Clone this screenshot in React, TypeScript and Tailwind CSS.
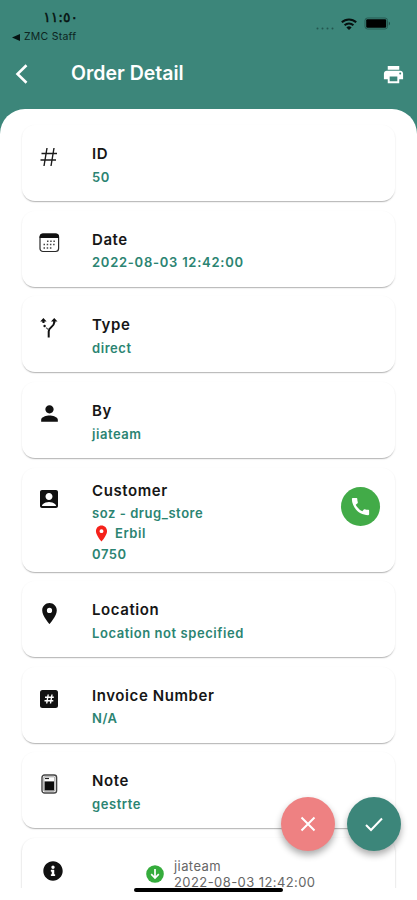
import type { ReactNode } from 'react';
import { MdAccountBox, MdCall, MdLocationOn, MdPerson, MdPrint } from 'react-icons/md';
import { FaInfoCircle } from 'react-icons/fa';

function HashIcon() {
  return (
    <svg width="18" height="20" viewBox="0 0 18 20" fill="none" stroke="#1c1c1c" strokeWidth="1.4">
      <path d="M7 1 4 19M14 1l-3 18M1.5 6.5h15.5M.5 13h15.5" />
    </svg>
  );
}

function CalendarIcon() {
  return (
    <svg width="21" height="20" viewBox="0 0 21 20" fill="none">
      <rect x="1" y="1.2" width="18.6" height="17.3" rx="3" stroke="#2a2a2a" strokeWidth="1.2" />
      <path d="M.6 5V4Q.6.6 4 .6h12.6Q20 .6 20 4v1z" fill="#111" />
      <path
        d="M8 8.3h9M4.5 11.6h12.5M4.5 14.9h9"
        stroke="#444"
        strokeWidth="1.5"
        strokeDasharray="1.5 1.7"
      />
    </svg>
  );
}

function RouteIcon() {
  return (
    <svg width="18" height="20" viewBox="0 0 18 20" fill="#111">
      <path d="M3.4 0l3.2 3.4H4.5V5H2.4V3.4H.2zM14.2 0l3.3 3.4h-2.2V5h-2.1V3.4h-2.2z" />
      <path d="M14.2 4.5C14 9.5 8.7 8.5 8.7 13.5V19.5" fill="none" stroke="#111" strokeWidth="2" />
      <circle cx="4.6" cy="8" r="1.2" />
      <path d="M6 9.6l2.7 2.2" stroke="#555" strokeWidth="1.2" />
    </svg>
  );
}

function NumberBoxIcon() {
  return (
    <svg width="18" height="18" viewBox="0 0 18 18" fill="none">
      <rect width="18" height="18" rx="2.5" fill="#111" />
      <path d="M8.2 4.5 6.7 13.5M12 4.5l-1.5 9M5 7.3h8.8M4.5 10.8h8.8" stroke="#fff" strokeWidth="1.4" />
    </svg>
  );
}

function NoteIcon() {
  return (
    <svg width="17" height="20" viewBox="0 0 17 20" fill="none">
      <rect x="1" y="1" width="14.6" height="18" rx="2.6" stroke="#444" strokeWidth="1.4" />
      <rect x="2.8" y="2.8" width="11" height="14.4" rx="1" stroke="#777" strokeWidth=".7" />
      <path d="M4 4.5h4" stroke="#222" strokeWidth="1.2" />
      <rect x="3.6" y="7.4" width="9.4" height="9" fill="#0c0c0c" />
    </svg>
  );
}

function StatusBar() {
  return (
    <div className="flex h-[48px] justify-between">
      <div className="w-[78px] pl-[12px] pt-[9px] text-[#0c2421]">
        <div className="text-right font-['DejaVu_Sans'] text-[14px] leading-[17px] tracking-[-1.4px] text-[#06110f] [-webkit-text-stroke:0.4px_#06110f]">
          ١١:٥٠
        </div>
        <div className="mt-[4px] flex items-center gap-[4px] text-[10.5px] leading-[14px] whitespace-nowrap">
          <svg width="8" height="7" viewBox="0 0 8 7">
            <path d="M8 0v7L0 3.5z" fill="#061413" />
          </svg>
          <span className="tracking-[0.25px]">ZMC Staff</span>
        </div>
      </div>
      <div className="flex h-[13px] items-center gap-[7px] pr-[26px] mt-[17px]">
        <svg width="18" height="3" viewBox="0 0 18 3" className="mt-[9px]" fill="#24564f">
          <circle cx="1.5" cy="1.5" r="1" />
          <circle cx="6.5" cy="1.5" r="1" />
          <circle cx="11.5" cy="1.5" r="1" />
          <circle cx="16.5" cy="1.5" r="1" />
        </svg>
        <svg width="16" height="12" viewBox="0 0 16 12" fill="none" stroke="#06110f" strokeWidth="2">
          <path d="M.8 4.3a10.4 10.4 0 0 1 14.4 0M3.6 7.2a6.3 6.3 0 0 1 8.8 0" />
          <path d="M8 12 5.4 9.4a3.8 3.8 0 0 1 5.2 0z" fill="#06110f" stroke="none" />
        </svg>
        <svg width="27" height="13" viewBox="0 0 27 13" fill="none">
          <rect x="1" y="1" width="22.5" height="11" rx="2.5" stroke="#265a53" />
          <rect x="2.2" y="2.2" width="20" height="8.6" rx="1.2" fill="#000" />
          <path d="M24.8 4.5v4a2.4 2.4 0 0 0 0-4" fill="#1c4741" />
        </svg>
      </div>
    </div>
  );
}

function DetailCard({ icon, title, children, className = 'h-[76px] pt-[19px]' }: {
  icon: ReactNode;
  title: string;
  children: ReactNode;
  className?: string;
}) {
  return (
    <div
      className={`flex shrink-0 rounded-[13px] bg-white shadow-[0_2px_1px_-1px_rgba(0,0,0,0.2),0_1px_2px_rgba(0,0,0,0.13)] ${className}`}
    >
      <div className="flex h-[26px] w-[54px] shrink-0 items-center justify-center text-[#111]">{icon}</div>
      <div className="pl-[16px] grow">
        <h2 className="text-[15px] leading-[20px] font-semibold tracking-[0.58px] text-[#161616]">{title}</h2>
        <div className="pt-[2.6px] text-[13px] leading-[20px] font-semibold tracking-[0.56px] text-[#2b8472]">
          {children}
        </div>
      </div>
    </div>
  );
}

export default function App() {
  return (
    <div className="relative flex h-[900px] w-[417px] flex-col overflow-hidden bg-white font-[Inter,sans-serif]">
      <div className="h-[135px] shrink-0 bg-[#3c867a]">
        <StatusBar />
        <header className="flex h-[52px] items-center pl-[15px] pr-[12px] text-white">
          <svg width="13" height="20" viewBox="0 0 13 20" fill="none" stroke="#fff" strokeWidth="2.6">
            <path d="M11.5 1.2 2.5 10l9 8.8" />
          </svg>
          <h1 className="grow pl-[43px] text-[19.5px] font-semibold">Order Detail</h1>
          <MdPrint size={23} />
        </header>
      </div>

      <main className="-mt-[26px] flex h-[779px] shrink-0 flex-col gap-[9.65px] overflow-hidden rounded-t-[25px] bg-white px-[22px] pt-[16px]">
        <DetailCard icon={<HashIcon />} title="ID">50</DetailCard>
        <DetailCard icon={<CalendarIcon />} title="Date">
          <span className="tracking-[0.74px]">2022-08-03 12:42:00</span>
        </DetailCard>
        <DetailCard icon={<RouteIcon />} title="Type">direct</DetailCard>
        <DetailCard icon={<MdPerson size={25} />} title="By">jiateam</DetailCard>
        <DetailCard
          icon={<div className="pt-[10px]"><MdAccountBox size={24} /></div>}
          title="Customer"
          className="relative h-[104px] pt-[13px]"
        >
          <p>soz - drug_store</p>
          <p className="flex items-center gap-[4px]">
            <MdLocationOn size={19} color="#f5221b" />
            Erbil
          </p>
          <p className="leading-[23px]">0750</p>
          <button className="absolute top-[19px] right-[15px] flex size-[39px] items-center justify-center rounded-full bg-[#42ab48] text-white">
            <MdCall size={23} />
          </button>
        </DetailCard>
        <DetailCard icon={<MdLocationOn size={25} />} title="Location">Location not specified</DetailCard>
        <DetailCard icon={<NumberBoxIcon />} title="Invoice Number">N/A</DetailCard>
        <DetailCard icon={<NoteIcon />} title="Note">gestrte</DetailCard>

        {/* order history */}
        <div className="flex h-[120px] shrink-0 rounded-[13px] bg-white pt-[18px] shadow-[0_1px_2px_rgba(0,0,0,0.25)]">
          <FaInfoCircle size={20} className="mt-[5px] ml-[21px] shrink-0 text-[#111]" />
          <svg width="18" height="18" viewBox="0 0 18 18" fill="none" className="mt-[9px] ml-[83px] shrink-0">
            <circle cx="9" cy="9" r="8.8" fill="#35ac3c" />
            <path d="M9 4v9M5.2 9.2 9 13l3.8-3.8" stroke="#fff" strokeWidth="1.7" />
          </svg>
          <div className="pl-[10px] pt-[2px] text-[13px] leading-[16px] tracking-[0.42px] text-[#666]">
            <p>jiateam</p>
            <p>2022-08-03 12:42:00</p>
          </div>
        </div>
      </main>

      <div className="absolute top-[797px] right-[16px] flex gap-[12px] text-white">
        <button className="flex size-[54px] items-center justify-center rounded-full bg-[#ee8182] shadow-[0_4px_7px_rgba(0,0,0,0.33)]">
          <svg width="16" height="16" viewBox="0 0 16 16" stroke="currentColor" strokeWidth="2">
            <path d="m1.5 1.5 13 13M14.5 1.5l-13 13" />
          </svg>
        </button>
        <button className="flex size-[54px] items-center justify-center rounded-full bg-[#3c867a] shadow-[0_4px_7px_rgba(0,0,0,0.33)]">
          <svg width="18" height="15" viewBox="0 0 18 15" fill="none" stroke="currentColor" strokeWidth="2">
            <path d="m1 8 5 5L17 1.5" />
          </svg>
        </button>
      </div>
      <div className="absolute top-[888px] left-[134px] h-[4px] w-[149px] rounded-full bg-black" />
    </div>
  );
}
